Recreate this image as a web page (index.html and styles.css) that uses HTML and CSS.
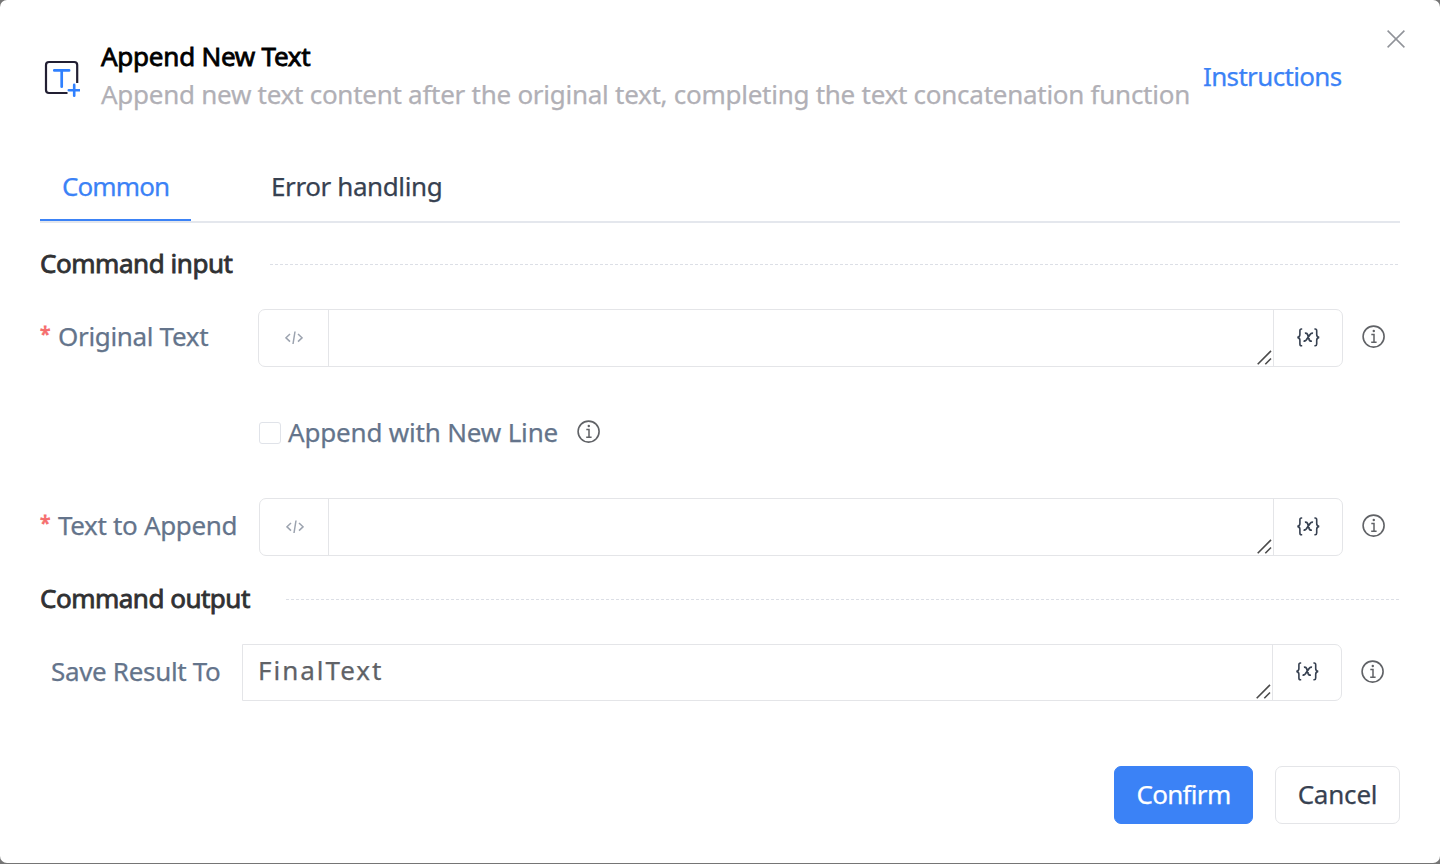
FILE: index.html
```html
<!DOCTYPE html>
<html lang="en">
<head>
<meta charset="utf-8">
<title>Append New Text</title>
<link rel="stylesheet" href="styles.css">
</head>
<body>
<svg class="defs" width="0" height="0" aria-hidden="true">
  <symbol id="info" viewBox="0 0 24 24">
    <circle cx="11.600" cy="11.600" r="10.500" fill="none" stroke="currentColor" stroke-width="1.600"/>
    <circle cx="11.800" cy="6" r="1.200" fill="currentColor"/>
    <path d="M9.300 9.600h2.700v7.700M9.200 17.300h5.400" fill="none" stroke="currentColor" stroke-width="1.500"/>
  </symbol>
  <symbol id="code" viewBox="0 0 18 14">
    <path d="M5 3 1 6.800l4 3.800M13 3l4 3.800-4 3.800M10 .5 8 13" fill="none" stroke="currentColor" stroke-width="1.500"/>
  </symbol>
  <symbol id="variable" viewBox="0 0 24 20">
    <path d="M6.200 1H5.400Q3.900 1 3.900 2.800v3.700Q3.900 9 1.400 9.400q2.500.4 2.500 2.900v3.700q0 1.800 1.500 1.800h.8M18.400 1h.8q1.500 0 1.500 1.800v3.700q0 2.500 2.500 2.900-2.500.4-2.500 2.900v3.700q0 1.800-1.500 1.800h-.8" fill="none" stroke="currentColor" stroke-width="1.600"/>
    <path d="M8.900 5.300q2-.5 2.700 1.300l1.600 5q.7 2 2.600 1.300M17 5.300q-1.700-.5-2.900 1.200l-3.700 5.300q-1.200 1.600-2.800 1.100" fill="none" stroke="currentColor" stroke-width="1.800"/>
  </symbol>
  <symbol id="grip" viewBox="0 0 16 16">
    <path d="M1.700 14.200 15 .9M9.300 14.200l5.700-5.700" fill="none" stroke="currentColor" stroke-width="1.600"/>
  </symbol>
</svg>
<main class="dialog">
  <header class="header">
    <svg class="command-icon" viewBox="0 0 40 42" width="40" height="42" fill="none">
      <path d="M37.200 27V9a3 3 0 0 0-3-3H9a3 3 0 0 0-3 3v25a3 3 0 0 0 3 3h18.500" stroke="#221f33" stroke-width="2.200"/>
      <path d="M14.300 14.400h14.800M21.700 14.400v16.300" stroke="#2f80ff" stroke-width="2.700" stroke-linecap="round"/>
      <path d="M28.800 34.300h10.800M34.200 28.900v10.800" stroke="#2f80ff" stroke-width="2.600" stroke-linecap="round"/>
    </svg>
    <div class="heading">
      <h1 class="title">Append New Text</h1>
      <p class="description">Append new text content after the original text, completing the text concatenation function</p>
    </div>
    <a class="instructions">Instructions</a>
    <svg class="close" viewBox="0 0 18 18" width="18" height="18"><path d="M.6.6l16.800 16.800M17.400.6.6 17.400" stroke="#909399" stroke-width="1.500"/></svg>
  </header>
  <nav class="tabs">
    <span class="tab active">Common</span>
    <span class="tab">Error handling</span>
  </nav>
  <h2 class="section"><span>Command input</span></h2>
  <div class="row">
    <div class="label"><span class="star">*</span><span>Original Text</span></div>
    <div class="field">
      <span class="prefix"><svg width="18" height="14"><use href="#code"/></svg></span>
      <span class="input"><svg class="grip" width="16" height="16"><use href="#grip"/></svg></span>
      <span class="suffix"><svg width="24" height="20"><use href="#variable"/></svg></span>
    </div>
    <svg class="info" width="24" height="24"><use href="#info"/></svg>
  </div>
  <div class="check-row">
    <span class="checkbox"></span>
    <span class="check-label">Append with New Line</span>
    <svg class="info" width="24" height="24"><use href="#info"/></svg>
  </div>
  <div class="row append">
    <div class="label"><span class="star">*</span><span>Text to Append</span></div>
    <div class="field">
      <span class="prefix"><svg width="18" height="14"><use href="#code"/></svg></span>
      <span class="input"><svg class="grip" width="16" height="16"><use href="#grip"/></svg></span>
      <span class="suffix"><svg width="24" height="20"><use href="#variable"/></svg></span>
    </div>
    <svg class="info" width="24" height="24"><use href="#info"/></svg>
  </div>
  <h2 class="section output"><span>Command output</span></h2>
  <div class="row result">
    <div class="label"><span>Save Result To</span></div>
    <div class="field">
      <span class="input"><span class="value">FinalText</span><svg class="grip" width="16" height="16"><use href="#grip"/></svg></span>
      <span class="suffix"><svg width="24" height="20"><use href="#variable"/></svg></span>
    </div>
    <svg class="info" width="24" height="24"><use href="#info"/></svg>
  </div>
  <footer class="footer">
    <button class="button primary">Confirm</button>
    <button class="button">Cancel</button>
  </footer>
</main>
</body>
</html>
```
FILE: styles.css
```css
* { box-sizing: border-box; }
body { margin: 0; background: #757575; font-family: "Noto Sans", sans-serif; font-size: 26px; line-height: 38px; color: #374151; overflow: hidden; -webkit-text-stroke: 0.25px currentColor; }
.defs { position: absolute; }
.dialog { width: 1440px; height: 863px; padding: 37px 40px 0; background: #fff; border-radius: 7px; white-space: nowrap; }
.header { display: flex; height: 115px; }
.command-icon { margin: 19px 21px 0 0; flex: none; }
.heading { width: 1102px; flex: none; }
.title, .section { margin: 0; font-size: 26px; font-weight: 400; -webkit-text-stroke: 0.8px currentColor; }
.title { color: #000; letter-spacing: -0.24px; }
.description { margin: 0; color: #b1b0b6; letter-spacing: -0.265px; }
.instructions { margin-top: 20px; width: 184px; flex: none; color: #3b82f6; letter-spacing: -0.65px; }
.close { margin-top: -7px; flex: none; }
.tabs { display: flex; height: 71px; gap: 57px; border-bottom: 2px solid #e4e7ed; letter-spacing: -0.4px; }
.tab { height: 69px; padding: 15px 22px 0 23px; }
.tab.active { width: 151px; padding-left: 22px; color: #3b82f6; border-bottom: 2px solid #3b82f6; letter-spacing: -0.9px; }
.section { display: flex; align-items: center; height: 38px; margin-top: 22px; color: #303133; letter-spacing: -0.45px; }
.section span { width: 230px; flex: none; padding-bottom: 2px; }
.section::after { content: ""; flex: 1; height: 1px; background: repeating-linear-gradient(90deg, #dcdfe6 0 3px, transparent 3px 5px); }
.row { display: flex; height: 58px; margin-top: 26px; align-items: center; }
.label { display: flex; width: 218px; flex: none; padding-bottom: 4px; color: #64748b; letter-spacing: -0.33px; }
.star { width: 18px; color: #f56c6c; font-size: 19px; line-height: 34px; -webkit-text-stroke: 0.8px currentColor; }
.field { display: flex; width: 1085px; height: 58px; flex: none; border: 1px solid #e4e5e8; border-radius: 7px; }
.prefix, .suffix { display: flex; align-items: center; justify-content: center; flex: none; }
.prefix { width: 70px; border-right: 1px solid #e4e5e8; color: #9ca3af; }
.suffix { width: 69px; border-left: 1px solid #e4e5e8; color: #374151; }
.input { display: flex; flex: 1; align-items: flex-end; justify-content: flex-end; padding: 0 1px 0 15px; }
.grip { color: #4b4b4b; }
.info { margin: -2px 0 0 19px; flex: none; color: #606266; }
.check-row { display: flex; align-items: center; height: 38px; margin: 47px 0 0 219px; }
.checkbox { width: 22px; height: 22px; border: 1px solid #e0e3e9; border-radius: 3px; }
.check-label { width: 270px; margin-left: 7px; padding-bottom: 2px; color: #64748b; letter-spacing: -0.18px; }
.append { margin-top: 46px; }
.append .label { width: 219px; }
.append .field { width: 1084px; }
.append .prefix { width: 69px; padding-left: 1px; }
.output { margin-top: 24px; letter-spacing: -0.5px; }
.output span { width: 246px; }
.result { height: 57px; margin-top: 26px; }
.result .label { width: 202px; padding: 0 0 3px 11px; }
.result .field { width: 1100px; height: 57px; border-radius: 0 7px 7px 0; }
.result .suffix { padding-bottom: 1px; }
.value { margin-right: auto; align-self: center; padding-bottom: 5px; color: #606266; letter-spacing: 2px; }
.footer { display: flex; justify-content: flex-end; gap: 22px; margin-top: 65px; }
.button { width: 125px; height: 58px; padding: 0 0 2px; font: inherit; color: #374151; background: #fff; border: 1px solid #e4e5e8; border-radius: 7px; letter-spacing: -0.2px; }
.button.primary { width: 139px; color: #fff; background: #3b82f6; border-color: #3b82f6; letter-spacing: -0.7px; }
```
